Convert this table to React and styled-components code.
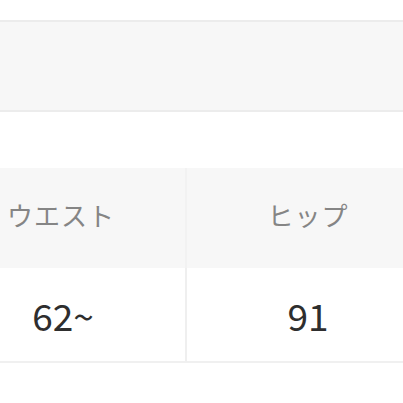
import styled, { createGlobalStyle } from 'styled-components';

const GlobalStyle = createGlobalStyle`
  html, body {
    margin: 0;
    padding: 0;
    background: #ffffff;
    overflow: hidden;
  }
  body {
    font-family: "Noto Sans CJK JP", "Noto Sans", sans-serif;
  }
`;

const Page = styled.div`
  width: 403px;
  height: 403px;
  overflow: hidden;
  padding-top: 20px;
  box-sizing: border-box;
`;

const Band = styled.div`
  height: 88px;
  background: #f7f7f7;
  border-top: 2px solid #ececec;
  border-bottom: 2px solid #ececec;
`;

const SizeTable = styled.div`
  display: grid;
  grid-template-columns: 250px 242px;
  margin-top: 56px;
  margin-left: -63px;
  width: 492px;
`;

const Cell = styled.div`
  display: flex;
  align-items: center;
  justify-content: center;
  box-sizing: border-box;
  height: ${({ $head }) => ($head ? '100px' : '95px')};
  background: ${({ $head }) => ($head ? '#f7f7f7' : '#ffffff')};
  color: ${({ $head }) => ($head ? '#858585' : '#2e2e2e')};
  font-size: ${({ $head }) => ($head ? '26px' : '37px')};
  letter-spacing: ${({ $head }) => ($head ? '1px' : '0')};
  padding-left: ${({ $head, $first }) => (!$head && $first ? '4px' : '0')};
  border-right: ${({ $first, $head }) =>
    $first ? `2px solid ${$head ? '#f2f2f2' : '#efefef'}` : 'none'};
  border-bottom: ${({ $head }) => ($head ? 'none' : '2px solid #f0f0f0')};
  padding-bottom: ${({ $head }) => ($head ? '8px' : '0')};
`;

const columns = [
  { label: 'ウエスト', value: '62~' },
  { label: 'ヒップ', value: '91' },
];

export default function App() {
  return (
    <Page>
      <GlobalStyle />
      <Band />
      <SizeTable>
        {columns.map((c, i) => (
          <Cell key={c.label} $head $first={i === 0}>
            {c.label}
          </Cell>
        ))}
        {columns.map((c, i) => (
          <Cell key={c.value} $first={i === 0}>
            {c.value}
          </Cell>
        ))}
      </SizeTable>
    </Page>
  );
}
